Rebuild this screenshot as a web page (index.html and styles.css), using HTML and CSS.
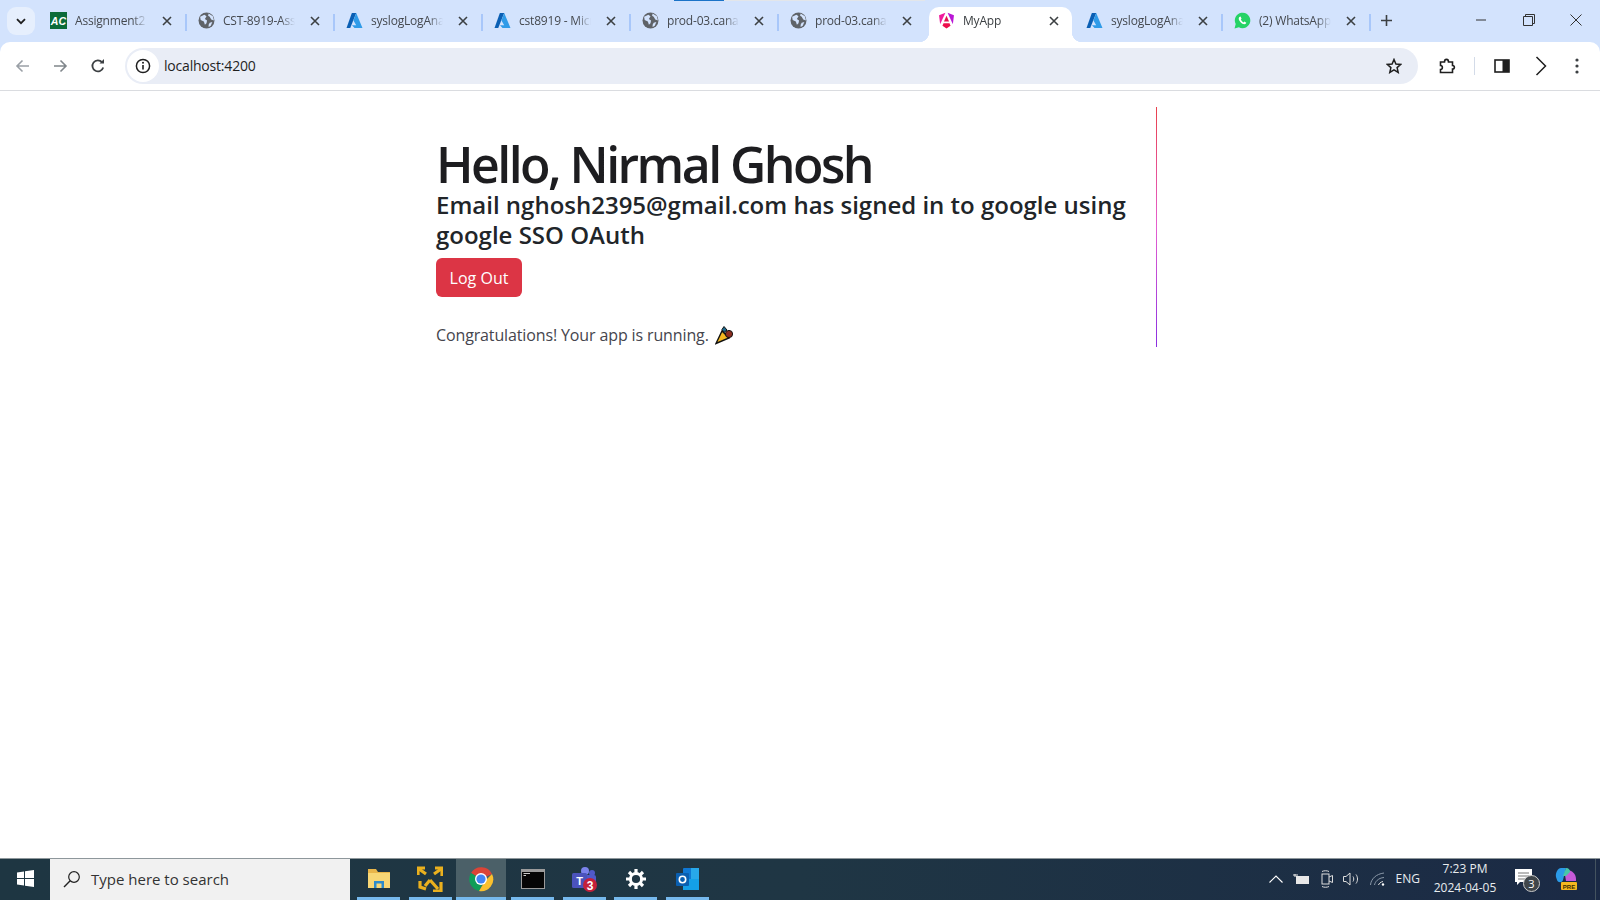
FILE: index.html
```html
<!DOCTYPE html>
<html lang="en">
<head>
    <meta charset="UTF-8">
    <meta name="viewport" content="width=device-width, initial-scale=1.0">
    <title>MyApp</title>
    <link rel="stylesheet" href="styles.css">
</head>
<body>
    <svg class="defs" width="0" height="0" aria-hidden="true">
        <symbol id="globe" viewBox="0 0 16 16">
            <circle cx="8" cy="8" r="7.5" fill="#5f6368"/>
            <path d="M2 4.5 6 2.5 8 4 6.5 6.5 8.5 8 8 10.5 6.5 12 5.5 9 2.5 7.5Z M10 1.5 14 4 15 8 12.5 7 11 4.5 9.5 3.5Z M11 10 13.5 9.5 12 13 10 14 10 12Z" fill="#d3e3fd"/>
        </symbol>
        <symbol id="azure" viewBox="0 0 16 16">
            <path d="M5.5 1H9.6L4 15H.5Z" fill="#0a5fb4"/>
            <path d="M9.6 1 15.5 15H8L5.6 12.4H9.6L7 8Z" fill="#2f9be8"/>
        </symbol>
        <symbol id="close" viewBox="0 0 10 10">
            <path d="M1 1 9 9M9 1 1 9" stroke="#3c4043" stroke-width="1.6" fill="none"/>
        </symbol>
    </svg>

    <div class="tabstrip">
        <div class="tab-search">
            <svg width="10" height="7" viewBox="0 0 10 7"><path d="M1 1.2 5 5.2 9 1.2" stroke="#1f1f1f" stroke-width="1.8" fill="none"/></svg>
        </div>
        <div class="tab">
            <svg class="favicon" viewBox="0 0 16 16"><rect width="16" height="16" fill="#0b6b3a"/><text x="8" y="12" class="ac-logo">AC</text></svg>
            <span class="tab-title">Assignment2 - Word</span>
            <svg class="tab-close"><use href="#close"/></svg>
        </div>
        <div class="tab">
            <svg class="favicon"><use href="#globe"/></svg>
            <span class="tab-title">CST-8919-Assignment</span>
            <svg class="tab-close"><use href="#close"/></svg>
        </div>
        <div class="tab">
            <svg class="favicon"><use href="#azure"/></svg>
            <span class="tab-title">syslogLogAnalytics</span>
            <svg class="tab-close"><use href="#close"/></svg>
        </div>
        <div class="tab">
            <svg class="favicon"><use href="#azure"/></svg>
            <span class="tab-title">cst8919 - Microsoft</span>
            <svg class="tab-close"><use href="#close"/></svg>
        </div>
        <div class="tab">
            <svg class="favicon"><use href="#globe"/></svg>
            <span class="tab-title">prod-03.canada</span>
            <svg class="tab-close"><use href="#close"/></svg>
        </div>
        <div class="tab no-sep">
            <svg class="favicon"><use href="#globe"/></svg>
            <span class="tab-title">prod-03.canada</span>
            <svg class="tab-close"><use href="#close"/></svg>
        </div>
        <div class="tab active">
            <svg class="favicon" viewBox="0 0 16 16">
                <path d="M1 3 7 .8 2 11.5Z" fill="#f01a9c"/>
                <path d="M15 3 9 .8 14 11.5Z" fill="#b916d6"/>
                <path d="M4.2 13 8 15.5 11.8 13 10.8 10.5H5.2Z" fill="#ec0f4c"/>
                <path d="M8 3.5 10.4 9H5.6Z" fill="#e0124f"/>
            </svg>
            <span class="tab-title">MyApp</span>
            <svg class="tab-close"><use href="#close"/></svg>
        </div>
        <div class="tab">
            <svg class="favicon"><use href="#azure"/></svg>
            <span class="tab-title">syslogLogAnalytics</span>
            <svg class="tab-close"><use href="#close"/></svg>
        </div>
        <div class="tab">
            <svg class="favicon" viewBox="0 0 16 16">
                <path d="M.5 15.5 1.6 11.4A7.3 7.3 0 1 1 4.6 14.4Z" fill="#25d366"/>
                <path d="M5 4.6C4 5.6 4.3 7.4 6 9.4 7.8 11.4 9.8 12 11 11.1L11.6 10 9.8 9 9 9.8C8.2 9.5 6.8 8.1 6.4 7.1L7.1 6.3 6.2 4.3Z" fill="#fff"/>
            </svg>
            <span class="tab-title">(2) WhatsApp</span>
            <svg class="tab-close"><use href="#close"/></svg>
        </div>
        <svg class="new-tab" width="11" height="11" viewBox="0 0 11 11"><path d="M5.5 0V11M0 5.5H11" stroke="#3c4043" stroke-width="1.6"/></svg>
        <div class="window-controls">
            <svg width="12" height="12" viewBox="0 0 12 12"><path d="M1 6H11" stroke="#333" stroke-width="1"/></svg>
            <svg width="12" height="12" viewBox="0 0 12 12"><path d="M.5 2.5H9.5V11.5H.5ZM2.5 2.5V.5H11.5V9.5H9.5" stroke="#333" fill="none"/></svg>
            <svg width="12" height="12" viewBox="0 0 12 12"><path d="M.5.5 11.5 11.5M11.5.5.5 11.5" stroke="#333" fill="none"/></svg>
        </div>
        <div class="load-bar"></div>
    </div>

    <div class="toolbar">
        <svg class="nav-icon" viewBox="0 0 16 16"><path d="M14 8H2.5M7.5 2.5 2 8l5.5 5.5" stroke="#9aa0a6" stroke-width="1.6" fill="none"/></svg>
        <svg class="nav-icon" viewBox="0 0 16 16"><path d="M2 8H13.5M8.5 2.5 14 8l-5.5 5.5" stroke="#80868b" stroke-width="1.6" fill="none"/></svg>
        <svg class="nav-icon" viewBox="0 0 16 16"><path d="M13.2 9.5A5.5 5.5 0 1 1 12 4.2" stroke="#3c4043" stroke-width="1.8" fill="none"/><path d="M9.5 5.5H14V1Z" fill="#3c4043"/></svg>
        <div class="omnibox">
            <div class="site-info">
                <svg width="16" height="16" viewBox="0 0 16 16"><circle cx="8" cy="8" r="6.6" stroke="#1f1f1f" stroke-width="1.5" fill="none"/><path d="M8 7V11.5" stroke="#1f1f1f" stroke-width="1.6"/><circle cx="8" cy="4.8" r="1" fill="#1f1f1f"/></svg>
            </div>
            <span class="url">localhost:4200</span>
            <svg class="star" width="16" height="16" viewBox="0 0 16 16"><path d="M8 1.5 9.9 6 14.8 6.4 11.1 9.6 12.2 14.4 8 11.9 3.8 14.4 4.9 9.6 1.2 6.4 6.1 6Z" stroke="#1f1f1f" stroke-width="1.5" fill="none"/></svg>
        </div>
        <div class="toolbar-actions">
            <svg class="puzzle" width="18" height="18" viewBox="0 0 18 18"><path d="M3 5H6.5C6.5 1.5 10.5 1.5 10.5 5H14.5V8.5C17 8.5 17 12 14.5 12V15.5H2.5V12.5C5 12.5 5 8.5 2.5 8.5V5Z" stroke="#1f1f1f" stroke-width="1.6" fill="none"/></svg>
            <span class="action-sep"></span>
            <svg class="panel" width="16" height="14" viewBox="0 0 16 14"><rect x="1" y="1" width="14" height="12" stroke="#1f1f1f" stroke-width="1.6" fill="none"/><rect x="8.5" y="1" width="6.5" height="12" fill="#1f1f1f"/></svg>
            <svg class="chevron" width="12" height="20" viewBox="0 0 12 20"><path d="M1.5 1 10.5 10 1.5 19" stroke="#1f1f1f" stroke-width="1.5" fill="none"/></svg>
            <svg class="dots" width="4" height="16" viewBox="0 0 4 16"><circle cx="2" cy="2" r="1.6" fill="#3c4043"/><circle cx="2" cy="8" r="1.6" fill="#3c4043"/><circle cx="2" cy="14" r="1.6" fill="#3c4043"/></svg>
        </div>
    </div>

    <main class="main">
        <div class="content">
            <div class="left-side">
                <h1>Hello, Nirmal Ghosh</h1>
                <h2>Email nghosh2395@gmail.com has signed in to google using google SSO OAuth</h2>
                <button class="btn-danger">Log Out</button>
                <p class="running">Congratulations! Your app is running.
                    <svg class="popper" width="20" height="20" viewBox="0 0 20 20">
                        <path d="M1 18.5 7 6 14 13Z" fill="#f5b81f" stroke="#111" stroke-width="1.4"/>
                        <circle cx="14" cy="9" r="3.6" fill="#8d2e20" stroke="#111"/>
                        <path d="M9 1.5 12 5 9 7.5 7 4.5Z" fill="#1c6a8f" stroke="#111"/>
                    </svg>
                </p>
            </div>
            <div class="divider"></div>
        </div>
    </main>

    <div class="taskbar">
        <div class="start">
            <svg width="17" height="17" viewBox="0 0 17 17"><path d="M0 2.4 7 1.4V8H0ZM8 1.2 17 0V8H8ZM0 9H7V15.6L0 14.6ZM8 9H17V17L8 15.8Z" fill="#fff"/></svg>
        </div>
        <div class="search">
            <svg width="18" height="18" viewBox="0 0 18 18"><circle cx="11" cy="7" r="5.3" stroke="#222" stroke-width="1.2" fill="none"/><path d="M7.2 10.8 1 17" stroke="#222" stroke-width="1.4"/></svg>
            <span>Type here to search</span>
        </div>
        <div class="apps">
            <div class="app running-app">
                <svg width="24" height="22" viewBox="0 0 24 22"><path d="M1 1H9L11 4H23V20H1Z" fill="#e9b64a"/><rect x="1" y="5" width="22" height="15" fill="#f8d775"/><path d="M7 20V13H17V20H14.5V15.5H9.5V20Z" fill="#2d8bcb"/></svg>
            </div>
            <div class="app running-app">
                <svg width="26" height="26" viewBox="0 0 26 26"><g stroke="#eab01e" stroke-width="3.2" fill="none"><path d="M2 3 9 8M24 3 17 8M13 14 21 23M13 14 8 20"/><path d="M1 9V2H8M25 10V2H18M24 16V25H16M3 15 3 21 9 23"/></g></svg>
            </div>
            <div class="app running-app current">
                <svg width="26" height="26" viewBox="0 0 26 26">
                    <path d="M13 13 3 7A12 12 0 0 1 24 8Z" fill="#db4437"/>
                    <path d="M3 7A12 12 0 0 0 11 25L16 15Z" fill="#0f9d58"/>
                    <path d="M24 8A12 12 0 0 1 11 25L17 15Z" fill="#fbc02d"/>
                    <circle cx="13" cy="13" r="6" fill="#fff"/>
                    <circle cx="13" cy="13" r="4.6" fill="#4285f4"/>
                </svg>
            </div>
            <div class="app running-app">
                <svg width="24" height="20" viewBox="0 0 24 20"><rect width="24" height="20" fill="#9b9b9b"/><rect x="1" y="3" width="22" height="16" fill="#050505"/><path d="M2.5 4.5H9M2.5 6.5H5" stroke="#ccc"/></svg>
            </div>
            <div class="app running-app">
                <svg width="28" height="28" viewBox="0 0 28 28">
                    <circle cx="15" cy="6" r="4" fill="#7b83eb"/>
                    <circle cx="22" cy="8" r="3" fill="#5059c9"/>
                    <rect x="15" y="10" width="11" height="10" rx="2" fill="#5059c9"/>
                    <rect x="2" y="8" width="15" height="15" rx="1.5" fill="#4b53bc"/>
                    <text x="9.5" y="20" class="teams-t">T</text>
                    <circle cx="20" cy="20" r="7" fill="#c4203a"/>
                    <text x="20" y="24.5" class="teams-badge">3</text>
                </svg>
            </div>
            <div class="app running-app">
                <svg width="20" height="20" viewBox="0 0 20 20"><circle cx="10" cy="10" r="5.6" stroke="#fff" stroke-width="3" fill="none"/><g stroke="#fff" stroke-width="3.2"><path d="M10 0V4M10 16V20M0 10H4M16 10H20M3 3 5.6 5.6M14.4 14.4 17 17M17 3 14.4 5.6M5.6 14.4 3 17"/></g></svg>
            </div>
            <div class="app running-app">
                <svg width="26" height="24" viewBox="0 0 26 24">
                    <rect x="8" y="1" width="16" height="22" rx="1" fill="#0f78d4"/>
                    <rect x="16" y="1" width="8" height="11" fill="#28a8ea"/>
                    <rect x="8" y="12" width="16" height="11" fill="#14a0e8"/>
                    <rect x="1" y="6" width="13" height="13" rx="1" fill="#0a5fb0"/>
                    <circle cx="7.5" cy="12.5" r="3.2" stroke="#fff" stroke-width="1.6" fill="none"/>
                </svg>
            </div>
        </div>
        <div class="tray">
            <svg class="tray-up" width="14" height="8" viewBox="0 0 14 8"><path d="M.5 7.5 7 1l6.5 6.5" stroke="#fff" fill="none" stroke-width="1.1"/></svg>
            <svg class="tray-battery" width="17" height="10" viewBox="0 0 17 10"><rect x="3" y="2" width="13" height="8" fill="#e8e8e8"/><path d="M0 1H5M2 0V3" stroke="#e8e8e8"/></svg>
            <svg class="tray-meet" width="12" height="18" viewBox="0 0 12 18"><rect x="1" y="4" width="7" height="10" stroke="#ddd" fill="none"/><path d="M8 7 11.5 5.5V12.5L8 11M1 1.5C3 .5 6 .5 8 1.5M1 16.5C3 17.5 6 17.5 8 16.5" stroke="#ddd" fill="none"/></svg>
            <svg class="tray-sound" width="17" height="14" viewBox="0 0 17 14"><path d="M.5 4.5H3L7 1V13L3 9.5H.5ZM10 4.5C11 6 11 8 10 9.5M13 2.5C15 5 15 9 13 11.5" stroke="#ddd" fill="none"/></svg>
            <svg class="tray-wifi" width="15" height="14" viewBox="0 0 15 14"><path d="M.5 13C1 7 6 2 14 1M4.5 13C5 10 8 6 14 5.5" stroke="#8a98a8" fill="none"/><path d="M8.5 13C9 11.5 10.5 10 13 9.5" stroke="#ddd" fill="none"/><circle cx="13" cy="12.5" r="1.2" fill="#fff"/></svg>
            <span class="lang">ENG</span>
            <div class="clock">
                <span>7:23 PM</span>
                <span>2024-04-05</span>
            </div>
            <div class="notify">
                <svg width="18" height="17" viewBox="0 0 18 17"><path d="M0 0H17V13H5L2 16V13H0Z" fill="#fff"/><path d="M3 4H14M3 7H14M3 10H10" stroke="#777"/></svg>
                <span class="notify-badge">3</span>
            </div>
            <div class="copilot">
                <svg width="22" height="24" viewBox="0 0 22 24">
                    <path d="M6 1H11L8 13C7 16 3 16 2 13L1 10C0 6 3 1 6 1Z" fill="#2b9be8"/>
                    <path d="M12 3C17 3 21 7 21 12V14H11L10 8Z" fill="#c65ad8"/>
                    <path d="M11 1C14 1 15 3 15 5L11 9H8Z" fill="#47c6a8"/>
                    <rect x="6" y="15" width="16" height="8" rx="1" fill="#f5b81f"/>
                    <text x="14" y="21.5" class="pre-label">PRE</text>
                </svg>
            </div>
        </div>
    </div>
</body>
</html>
```

FILE: styles.css
```css
* {
    box-sizing: border-box;
}

html, body {
    height: 100%;
}

body {
    margin: 0;
    width: 1600px;
    height: 900px;
    overflow: hidden;
    display: flex;
    flex-direction: column;
    font-family: "Open Sans", "Liberation Sans", sans-serif;
    background-color: #d3e3fd;
}

.defs {
    position: absolute;
}

/* browser tabs */
.tabstrip {
    position: relative;
    height: 42px;
    flex: none;
    display: flex;
    align-items: flex-end;
    background-color: #d3e3fd;
    padding-left: 7px;
}

.tab-search {
    width: 28px;
    height: 28px;
    margin: 0 4px 7px 0;
    border-radius: 9px;
    background-color: #e6effd;
    display: flex;
    align-items: center;
    justify-content: center;
}

.tab {
    position: relative;
    width: 148px;
    height: 35px;
    flex: none;
    display: flex;
    align-items: center;
    padding: 0 10px 8px 11px;
}

.tab::after {
    content: "";
    position: absolute;
    right: 0;
    top: 7px;
    width: 2px;
    height: 17px;
    background-color: #a8c7fa;
}

.tab.no-sep::after {
    display: none;
}

.tab.active {
    background-color: #fff;
    width: 143px;
    margin: 0 3px 0 2px;
    padding-left: 9px;
    border-radius: 10px 10px 0 0;
}

/* flared bottom corners of the open tab */
.tab.active::before,
.tab.active::after {
    content: "";
    position: absolute;
    bottom: 0;
    top: auto;
    width: 10px;
    height: 10px;
}

.tab.active::before {
    left: -10px;
    right: auto;
    background: radial-gradient(circle at 0 0, #d3e3fd 10px, #fff 10.5px);
}

.tab.active::after {
    right: -10px;
    background: radial-gradient(circle at 100% 0, #d3e3fd 10px, #fff 10.5px);
}

.tab.active .tab-title {
    color: #3c4043;
}

.tab.active .tab-close {
    margin-left: 14px;
}

.favicon {
    width: 17px;
    height: 17px;
    flex: none;
}

.ac-logo {
    font: italic bold 10px "Liberation Sans", sans-serif;
    fill: #fff;
    text-anchor: middle;
}

.tab-title {
    width: 72px;
    margin-left: 8px;
    flex: none;
    overflow: hidden;
    white-space: nowrap;
    font-size: 12px;
    letter-spacing: -0.2px;
    color: #45494f;
    -webkit-mask-image: linear-gradient(90deg, #000 80%, transparent);
    mask-image: linear-gradient(90deg, #000 80%, transparent);
}

.tab-close {
    width: 10px;
    height: 10px;
    margin-left: 14.5px;
    flex: none;
}

.new-tab {
    margin: 0 0 16px 10px;
}

.window-controls {
    display: flex;
    gap: 35.5px;
    margin: 0 0 16px 83px;
}

.load-bar {
    position: absolute;
    left: 674px;
    top: 0;
    width: 251px;
    height: 1px;
    background: linear-gradient(90deg, #1a73c8 50px, #e3e6ea 50px);
}

/* address bar row */
.toolbar {
    height: 49px;
    flex: none;
    display: flex;
    align-items: center;
    padding: 0 0 1px 15px;
    background-color: #fff;
    border-bottom: 1px solid #dadce0;
    border-radius: 10px 10px 0 0;
}

.nav-icon {
    width: 16px;
    height: 16px;
    margin-right: 21px;
    flex: none;
}

.nav-icon:nth-child(3) {
    margin-left: 1px;
    margin-right: 20px;
}

.omnibox {
    width: 1293px;
    height: 36px;
    margin-left: -1px;
    flex: none;
    display: flex;
    align-items: center;
    padding: 0 16px 0 2px;
    border-radius: 18px;
    background-color: #e9edf6;
}

.site-info {
    width: 32px;
    height: 32px;
    border-radius: 50%;
    background-color: #fff;
    display: flex;
    align-items: center;
    justify-content: center;
}

.url {
    margin-left: 5px;
    font-size: 14px;
    letter-spacing: -0.2px;
    color: #1f1f1f;
}

.star {
    margin-left: auto;
}

.toolbar-actions {
    display: flex;
    align-items: center;
}

.puzzle {
    margin-left: 20px;
}

.action-sep {
    width: 1px;
    height: 18px;
    margin: 0 19px 0 18px;
    background-color: #d3dbe8;
}

.chevron {
    margin-left: 25px;
}

.dots {
    margin-left: 28px;
}

/* page */
.main {
    flex: 1;
    padding-top: 16px;
    display: flex;
    justify-content: center;
    background-color: #fff;
}

.content {
    width: 728px;
    display: flex;
    align-items: flex-start;
}

.left-side {
    width: 712px;
    padding-top: 32px;
}

.divider {
    width: 1px;
    height: 240px;
    margin: 0 7px 0 8px;
    background: linear-gradient(180deg, #e9414c 0%, #e55fd0 50%, #8a2fe0 100%);
}

h1 {
    margin: 0;
    font-size: 50px;
    font-weight: 600;
    line-height: 50px;
    letter-spacing: -2.55px;
    color: #1d1d20;
}

h2 {
    margin: 1px 0 0;
    font-size: 24px;
    font-weight: 600;
    line-height: 30px;
    color: #212529;
}

.btn-danger {
    display: block;
    margin-top: 8px;
    width: 86px;
    height: 39px;
    padding: 0;
    font-family: inherit;
    font-size: 16px;
    color: #fff;
    background-color: #dc3545;
    border: none;
    border-radius: 6px;
}

.running {
    margin: 26px 0 0;
    height: 24px;
    display: flex;
    align-items: center;
    gap: 6px;
    font-size: 16px;
    letter-spacing: -0.13px;
    color: #45454d;
}

/* windows taskbar */
.taskbar {
    height: 42px;
    flex: none;
    display: flex;
    background: linear-gradient(90deg, #1e3642, #1f3644 50%, #1b2a45);
    border-top: 1px solid #8e979b;
}

.start {
    width: 50px;
    padding-bottom: 2px;
    display: flex;
    align-items: center;
    justify-content: center;
}

.search {
    width: 300px;
    display: flex;
    align-items: center;
    gap: 10px;
    padding: 0 0 2px 13px;
    font-size: 15px;
    color: #333;
    background-color: #f1f1f1;
}

.apps {
    display: flex;
    padding-left: 7px;
    gap: 8.7px;
}

.app {
    position: relative;
    width: 43px;
    padding-bottom: 2px;
    display: flex;
    align-items: center;
    justify-content: center;
}

.running-app::after {
    content: "";
    position: absolute;
    left: 0;
    right: 0;
    bottom: 0;
    height: 3px;
    background-color: #76b9ed;
}

.app.current {
    width: 50px;
    margin: 0 -4px;
    background-color: #4b6068;
}

.teams-t,
.teams-badge {
    font-family: "Liberation Sans", sans-serif;
    font-weight: bold;
    fill: #fff;
    text-anchor: middle;
}

.teams-t {
    font-size: 11px;
}

.teams-badge {
    font-size: 12px;
}

.pre-label {
    font: bold 6px "Liberation Sans", sans-serif;
    fill: #3b2a00;
    text-anchor: middle;
}

.tray {
    margin-left: auto;
    padding: 0 18px 2px 0;
    display: flex;
    align-items: center;
    color: #e8ecef;
    border-right: 1px solid #44535f;
    margin-right: 4px;
}

.tray-battery {
    margin-left: 10px;
}

.tray-meet {
    margin-left: 11px;
}

.tray-sound {
    margin-left: 10px;
}

.tray-wifi {
    margin-left: 10px;
}

.lang {
    margin-left: 11px;
    font-size: 12px;
}

.clock {
    width: 66px;
    margin-left: 12px;
    display: flex;
    flex-direction: column;
    align-items: center;
    font-size: 12px;
    line-height: 18.5px;
}

.notify {
    position: relative;
    margin-left: 17px;
    height: 20px;
}

.notify-badge {
    position: absolute;
    left: 8px;
    top: 6px;
    width: 17px;
    height: 17px;
    border-radius: 50%;
    font-size: 11px;
    line-height: 15px;
    text-align: center;
    color: #fff;
    background-color: #40464b;
    border: 1px solid #ccc;
}

.copilot {
    margin-left: 22px;
    height: 24px;
}
```
